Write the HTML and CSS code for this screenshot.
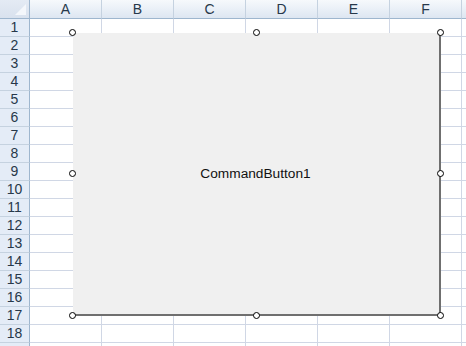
FILE: index.html
```html
<!DOCTYPE html>
<html>
<head>
<meta charset="utf-8">
<link rel="stylesheet" href="styles.css">
</head>
<body>
<div class="sheet">
  <div class="grid" id="grid">
    <div class="corner"><div class="tri"></div></div>
    <div class="ch">A</div><div class="ch">B</div><div class="ch">C</div><div class="ch">D</div><div class="ch">E</div><div class="ch">F</div><div class="ch">G</div>
  </div>
  <div class="button">
    <span class="label">CommandButton1</span>
  </div>
  <div class="h" style="left:73px;top:33px"></div>
  <div class="h" style="left:257px;top:33px"></div>
  <div class="h" style="left:441px;top:33px"></div>
  <div class="h" style="left:73px;top:174px"></div>
  <div class="h" style="left:441px;top:174px"></div>
  <div class="h" style="left:73px;top:316px"></div>
  <div class="h" style="left:257px;top:316px"></div>
  <div class="h" style="left:441px;top:316px"></div>
</div>
<script>
  var g = document.getElementById('grid');
  var html = '';
  for (var r = 1; r <= 19; r++) {
    html += '<div class="rh">' + r + '</div>';
    for (var c = 0; c < 7; c++) html += '<div class="cell"></div>';
  }
  g.insertAdjacentHTML('beforeend', html);
</script>
</body>
</html>
```
FILE: styles.css
```css
html, body {
  margin: 0;
  padding: 0;
  background: #ffffff;
  overflow: hidden;
}
.sheet {
  position: relative;
  width: 466px;
  height: 346px;
  overflow: hidden;
  font-family: "Liberation Sans", Arial, sans-serif;
}
.grid {
  display: grid;
  grid-template-columns: 30px repeat(7, 72px);
  grid-template-rows: 19px;
  grid-auto-rows: 18px;
}
.corner {
  position: relative;
  box-sizing: border-box;
  background: linear-gradient(#e4ebf4, #d9e2ee);
  border-right: 1px solid #9eb6ce;
  border-bottom: 1px solid #9eb6ce;
}
.tri {
  position: absolute;
  right: 3px;
  bottom: 3px;
  width: 0;
  height: 0;
  border-left: 11px solid transparent;
  border-bottom: 11px solid #f4f7fb;
}
.ch {
  box-sizing: border-box;
  background: linear-gradient(#f6f9fc 0%, #eaf0f7 50%, #dde6f1 100%);
  border-right: 1px solid #c5d2e0;
  border-bottom: 1px solid #9eb6ce;
  color: #27384a;
  font-size: 14px;
  line-height: 18px;
  text-align: center;
}
.rh {
  box-sizing: border-box;
  background: #e4ecf7;
  border-right: 1px solid #9eb6ce;
  border-bottom: 1px solid #c5d2e0;
  color: #27384a;
  font-size: 14px;
  line-height: 17px;
  text-align: center;
}
.cell {
  box-sizing: border-box;
  border-right: 1px solid #d0d7e5;
  border-bottom: 1px solid #d0d7e5;
}
.button {
  position: absolute;
  left: 73px;
  top: 33px;
  width: 368px;
  height: 283px;
  box-sizing: border-box;
  background: #f0f0f0;
  border-right: 2px solid #6f6f6f;
  border-bottom: 2px solid #6f6f6f;
  display: flex;
  align-items: center;
  justify-content: center;
}
.label {
  font-size: 13.7px;
  color: #111111;
  margin-right: 1px;
}
.h {
  position: absolute;
  width: 7px;
  height: 7px;
  margin-left: -4px;
  margin-top: -4px;
  box-sizing: border-box;
  border: 1px solid #000000;
  border-radius: 50%;
  background: #ffffff;
}
```
